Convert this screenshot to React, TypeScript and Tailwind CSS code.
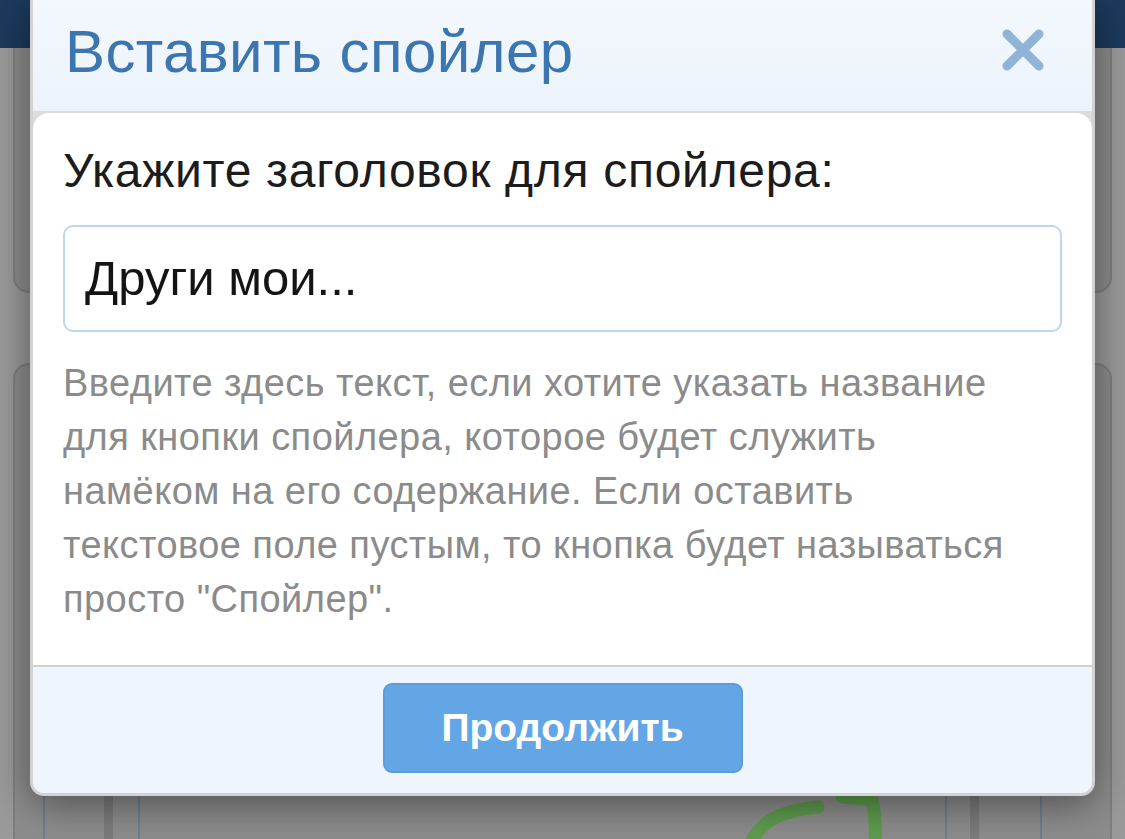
import React from 'react';

const CloseIcon = () => (
  <svg width="42" height="42" viewBox="0 0 42 42" fill="none">
    <path d="M5 5 L37 37 M37 5 L5 37" stroke="#8fb4d8" strokeWidth="9" strokeLinecap="round" />
  </svg>
);

export default function App() {
  return (
    <div className="relative w-[1125px] h-[839px] overflow-hidden bg-[#9a9a9a] font-['Liberation_Sans',Arial,sans-serif]">
      {/* dimmed page behind the dialog */}
      <div className="flex flex-col h-full">
        <div className="h-[48px] bg-[#1c3a5d]" />
        <div className="flex-1 flex flex-col gap-[70px] px-[13px]">
          <div className="h-[245px] rounded-b-[16px] border-x-2 border-b-2 border-[#7f7f7f] bg-[#8d8d8d]" />
          <div className="relative flex-1 rounded-t-[16px] border-x-2 border-t-2 border-[#7f7f7f] bg-[#8d8d8d]">
            <div className="absolute left-[28px] top-[420px] bottom-0 w-[2px] bg-[#6f7f90]" />
            <div className="absolute left-[89px] top-[420px] bottom-0 w-[9px] bg-[#7c7c7c]" />
            <div className="absolute left-[123px] top-[420px] bottom-0 w-[2px] bg-[#6f7f90]" />
            <div className="absolute left-[930px] top-[420px] bottom-0 w-[2px] bg-[#6f7f90]" />
            <div className="absolute left-[955px] top-[420px] bottom-0 w-[9px] bg-[#7c7c7c]" />
            <div className="absolute left-[1025px] top-[420px] bottom-0 w-[2px] bg-[#6f7f90]" />
            <svg className="absolute left-[725px] top-[415px]" width="160" height="70" viewBox="0 0 160 70" fill="none">
              <path d="M8 68 C20 42 35 32 78 27" stroke="#5e9c4e" strokeWidth="13" strokeLinecap="round" />
              <path d="M102 17 L132 20 C136 35 136 50 135 70" stroke="#5e9c4e" strokeWidth="13" strokeLinecap="round" />
            </svg>
          </div>
        </div>
      </div>

      {/* dialog */}
      <div className="absolute left-[30px] top-0 w-[1065px] h-[796px] flex flex-col bg-[#dcdcdc] border-x-[3px] border-b-[3px] border-[#d2d2d2] rounded-b-[14px] overflow-hidden shadow-[0_8px_40px_rgba(0,0,0,0.45)]">
        <div className="h-[113px] shrink-0 flex items-center justify-between pl-[32px] pr-[48px] bg-gradient-to-b from-[#f3f8fd] to-[#ecf3fb] border-b-2 border-[#dcdcdc]">
          <h2 className="text-[60px] leading-none tracking-[0.4px] text-[#3c76b1] pb-[8px]">Вставить спойлер</h2>
          <div className="pb-[12px]">
            <CloseIcon />
          </div>
        </div>
        <div className="flex-1 bg-white rounded-t-[16px] px-[30px] pt-[29px] flex flex-col">
          <label className="text-[48px] leading-[58px] tracking-[0.7px] text-[#1c1c1c]">Укажите заголовок для спойлера:</label>
          <div className="mt-[25px] h-[107px] rounded-[10px] border-2 border-[#bcd7ee] flex items-center px-[20px]">
            <span className="text-[49px] leading-none text-[#141414]">Други мои...</span>
          </div>
          <p className="mt-[24px] text-[38px] leading-[54px] tracking-[0.45px] text-[#8b8b8b] whitespace-nowrap">
            Введите здесь текст, если хотите указать название
            <br />
            для кнопки спойлера, которое будет служить
            <br />
            намёком на его содержание. Если оставить
            <br />
            текстовое поле пустым, то кнопка будет называться
            <br />
            просто "Спойлер".
          </p>
        </div>
        <div className="h-[128px] shrink-0 border-t-2 border-[#cfcfcf] bg-[#eff5fc] flex justify-center pt-[16px]">
          <button className="w-[360px] h-[90px] rounded-[9px] bg-[#63a6e5] border-2 border-[#5b9cdc] text-white text-[39px] font-bold">
            Продолжить
          </button>
        </div>
      </div>
    </div>
  );
}
